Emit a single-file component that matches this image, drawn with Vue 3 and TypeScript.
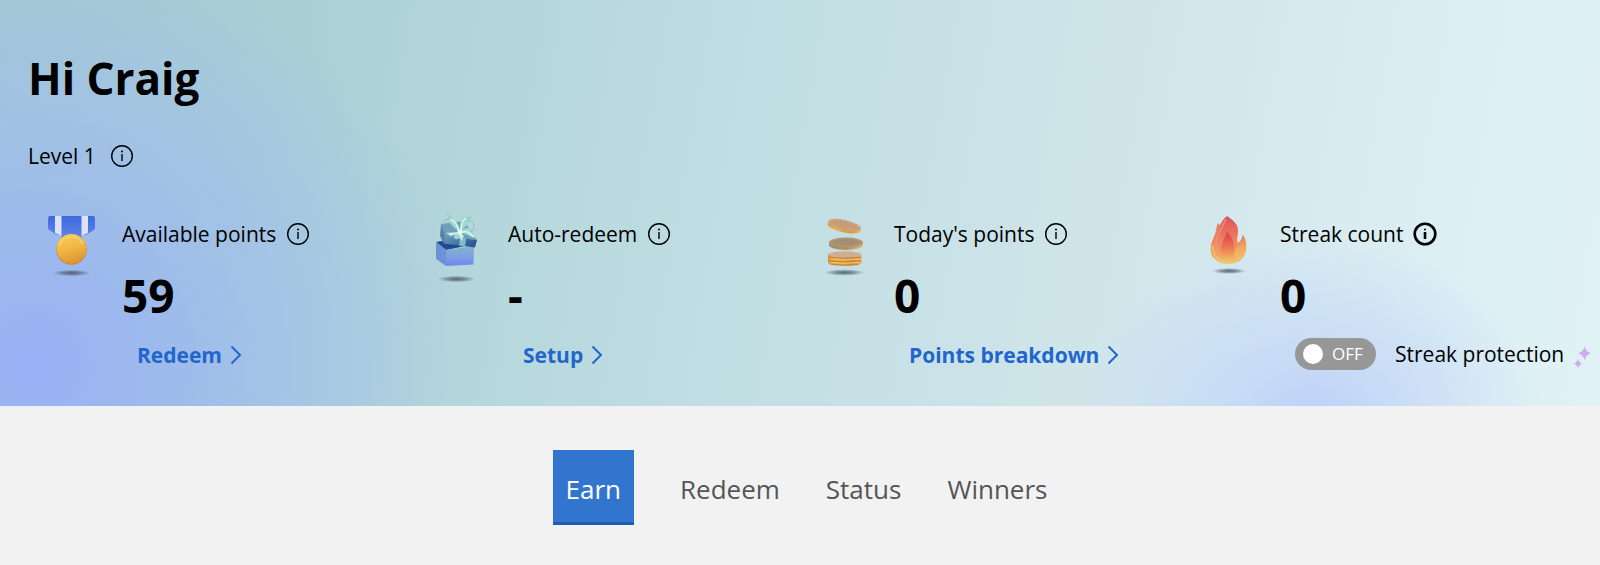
<script setup lang="ts">
import { ref } from 'vue'

type IconName = 'medal' | 'gift' | 'coins' | 'flame'

interface Stat {
  icon: IconName
  label: string
  value: string
  link?: string
  strong?: boolean
}

const stats: Stat[] = [
  { icon: 'medal', label: 'Available points', value: '59', link: 'Redeem' },
  { icon: 'gift', label: 'Auto-redeem', value: '-', link: 'Setup' },
  { icon: 'coins', label: "Today's points", value: '0', link: 'Points breakdown' },
  { icon: 'flame', label: 'Streak count', value: '0', strong: true },
]

const tabs: string[] = ['Earn', 'Redeem', 'Status', 'Winners']
const activeTab = ref<string>('Earn')
const streakProtection = ref<boolean>(false)
</script>

<template>
  <div class="page">
    <header class="hero">
      <h1 class="greeting">Hi Craig</h1>
      <div class="level">
        <span>Level 1</span>
        <button class="info" type="button" aria-label="About levels">
          <svg viewBox="0 0 24 24" aria-hidden="true">
            <circle cx="12" cy="12" r="10.3" />
            <path d="M12 10v7" />
            <circle class="dot" cx="12" cy="7.4" r="1" />
          </svg>
        </button>
      </div>

      <div class="stats">
        <section v-for="stat in stats" :key="stat.label" class="stat">
          <div class="picture">
            <svg v-if="stat.icon === 'medal'" viewBox="0 0 70 80" aria-hidden="true">
              <defs>
                <linearGradient id="ribbon" x1="0" y1="0" x2="0" y2="1">
                  <stop offset="0" stop-color="#3f68dc" />
                  <stop offset="1" stop-color="#5c84ea" />
                </linearGradient>
                <linearGradient id="gold" x1="0" y1="0" x2="0.3" y2="1">
                  <stop offset="0" stop-color="#fbcf62" />
                  <stop offset="0.6" stop-color="#efb542" />
                  <stop offset="1" stop-color="#dc9a35" />
                </linearGradient>
                <radialGradient id="shade">
                  <stop offset="0" stop-color="#3f4a5c" stop-opacity="0.8" />
                  <stop offset="0.5" stop-color="#4b5668" stop-opacity="0.55" />
                  <stop offset="1" stop-color="#5b6678" stop-opacity="0" />
                </radialGradient>
              </defs>
              <path d="M10 12h11v19h-4l-8-5q-1-1-1-3v-8q0-3 2-3z" fill="url(#ribbon)" />
              <path d="M53 12h-11v19h4l8-5q1-1 1-3v-8q0-3-2-3z" fill="url(#ribbon)" />
              <path d="M15 12h7v20l-7-3z" fill="#dde2f6" />
              <path d="M48 12h-7v20l7-3z" fill="#dde2f6" />
              <path d="M21.500 12h20v22h-20z" fill="url(#ribbon)" />
              <circle cx="31.500" cy="45.500" r="15.300" fill="#c68836" />
              <circle cx="31.500" cy="44.800" r="14.900" fill="url(#gold)" />
              <path d="M19 42a13 13 0 0 1 24-2" fill="none" stroke="#ffe08a" stroke-width="1.200" opacity="0.600" />
              <ellipse cx="31.500" cy="69" rx="19" ry="3.300" fill="url(#shade)" />
            </svg>

            <svg v-else-if="stat.icon === 'gift'" viewBox="1 0 70 80" aria-hidden="true">
              <defs>
                <linearGradient id="box" x1="0" y1="0" x2="0" y2="1">
                  <stop offset="0" stop-color="#7eb6c7" />
                  <stop offset="0.5" stop-color="#7fa2df" />
                  <stop offset="1" stop-color="#6e86f0" />
                </linearGradient>
                <linearGradient id="lid" x1="0" y1="0" x2="1" y2="0.5">
                  <stop offset="0" stop-color="#6a9dbb" />
                  <stop offset="1" stop-color="#2d5697" />
                </linearGradient>
              </defs>
              <path d="M11 38l18-3 21 5-29 6z" fill="#244991" />
              <path d="M11 38.500l10 7.500v16l-10-7z" fill="#6b91d9" />
              <path d="M21 46l28-4-.5 18.500L21 62z" fill="url(#box)" />
              <path d="M16 20l23-3 13 19-33-3z" fill="#6f9fb8" />
              <path d="M19 32l33 4-2 7.500-31-4z" fill="url(#lid)" />
              <path d="M16 20l4 12-1 8-4-8z" fill="#5585ae" />
              <path d="M35 33.500l6 1-1 8-6-1z" fill="#83bdc8" />
              <path d="M34 28C28 22 21 17 23 13.500S34 18 35 26c0-9 2-15 7-15s4 8-6 16c9-8 12 0 15 7-6-1-10-4-14-5-1 5-4 8-8 5 0-3 2-5 5-6z" fill="#a0d8cf" />
              <path d="M34 28l-13 1 5 3 8-3 2 8 3-5z" fill="#c9f0e4" />
              <path d="M34 27c-2-7-6-11-9-12M36 27c0-7 2-11 5-13M37 28c5-2 8 1 12 5" fill="none" stroke="#d8f6ed" stroke-width="1.500" />
              <path d="M26 15q-7-1-6 5M21 9q4 3 5 5M42 17q6-1 7 4t-4 7M47 14q-2-2-5 1" fill="none" stroke="#8cc3c6" stroke-width="1" />
              <circle cx="35" cy="28" r="2.500" fill="#e4fff5" />
              <ellipse cx="31.500" cy="75" rx="19" ry="3.300" fill="url(#shade)" />
            </svg>

            <svg v-else-if="stat.icon === 'coins'" viewBox="-3 0 70 80" aria-hidden="true">
              <defs>
                <linearGradient id="edge" x1="0" y1="0" x2="1" y2="0">
                  <stop offset="0" stop-color="#e09a3e" />
                  <stop offset="0.3" stop-color="#e9ae52" />
                  <stop offset="0.7" stop-color="#d9953f" />
                  <stop offset="1" stop-color="#ecb45e" />
                </linearGradient>
                <linearGradient id="dull" x1="0" y1="0" x2="1" y2="0">
                  <stop offset="0" stop-color="#a98a52" />
                  <stop offset="0.5" stop-color="#b3904f" />
                  <stop offset="1" stop-color="#dfb96c" />
                </linearGradient>
              </defs>
              <g transform="rotate(13 29.5 21.5)">
                <ellipse cx="29.500" cy="23.500" rx="16.800" ry="5" fill="url(#edge)" />
                <ellipse cx="29.500" cy="21" rx="16.800" ry="5" fill="#cda27b" />
                <ellipse cx="29.500" cy="20.800" rx="13" ry="3.200" fill="#c79c77" />
              </g>
              <ellipse cx="31" cy="41" rx="17" ry="5" fill="url(#dull)" />
              <path d="M14 38.500h34v2.500h-34z" fill="url(#dull)" />
              <ellipse cx="31" cy="38.500" rx="17" ry="5" fill="#ad9579" />
              <ellipse cx="31" cy="38.300" rx="13" ry="3.200" fill="#a68e73" />
              <path d="M13 50.500h33.500v8.500q-2 3-16.700 3t-16.800-3z" fill="url(#edge)" />
              <ellipse cx="29.700" cy="50.500" rx="16.700" ry="3.200" fill="#cfae95" />
              <path d="M13.300 53.200q16 2.500 33 0M13.300 56.800q16 2.500 33 0" fill="none" stroke="#bd7a2e" stroke-width="0.900" />
              <path d="M16 54.800q14 2 28 0M16 58.300q14 2 28 0" fill="none" stroke="#f4c56c" stroke-width="1" />
              <path d="M16 60.300q14 1.800 28 0" fill="none" stroke="#ae8b48" stroke-width="1" />
              <ellipse cx="29.500" cy="68.500" rx="20" ry="3.300" fill="url(#shade)" />
            </svg>

            <svg v-else viewBox="-2 0 70 80" aria-hidden="true">
              <defs>
                <linearGradient id="fire" x1="0" y1="0" x2="0" y2="1">
                  <stop offset="0" stop-color="#dd5058" />
                  <stop offset="0.45" stop-color="#ec7d60" />
                  <stop offset="0.8" stop-color="#f0a25e" />
                  <stop offset="1" stop-color="#efc878" />
                </linearGradient>
                <linearGradient id="core" x1="0" y1="0" x2="0" y2="1">
                  <stop offset="0" stop-color="#dc3f49" />
                  <stop offset="0.5" stop-color="#e96850" stop-opacity="0.850" />
                  <stop offset="1" stop-color="#f3a558" stop-opacity="0" />
                </linearGradient>
                <linearGradient id="side" x1="0" y1="0" x2="0" y2="1">
                  <stop offset="0" stop-color="#e37a57" />
                  <stop offset="0.5" stop-color="#f0ab60" />
                  <stop offset="1" stop-color="#f0c56c" />
                </linearGradient>
              </defs>
              <path d="M18 19c3 3 4 8 2 13l-7 23c-4-10-2-16 1-22 2-5 2-10 4-14z" fill="url(#side)" />
              <path d="M27 12c8 5 12 10 11 17-1 5-1 9 0 10 3-2 4-5 5-8 2 5 3 13 2 18-2 7-8 11-17 11-11 0-18-7-17-17 1-8 5-13 8-19 2-5 3-8 8-12z" fill="url(#fire)" />
              <path d="M43 31c4 6 4 13 2 19-3 7-9 9-16 9 8-4 6-9 6-12 1-5 7-8 8-16z" fill="url(#side)" />
              <path d="M27 28c5 5 7 9 7 16 1 6-3 10-9 12-7-6-4-15 2-28z" fill="url(#core)" />
              <path d="M26 15c-4 9-7 12-9 18-2 5-1 11 1 14" fill="none" stroke="#f2978a" stroke-width="2" opacity="0.600" />
              <path d="M13 42c-1 9 6 16 15 16" fill="none" stroke="#f1ca6c" stroke-width="2" opacity="0.700" />
              <ellipse cx="29" cy="67" rx="17" ry="3" fill="url(#shade)" />
            </svg>
          </div>

          <div class="details">
            <div class="label">
              <h2>{{ stat.label }}</h2>
              <button class="info" :class="{ strong: stat.strong }" type="button" :aria-label="`About ${stat.label}`">
                <svg viewBox="0 0 24 24" aria-hidden="true">
                  <circle cx="12" cy="12" r="10.3" />
                  <path d="M12 10v7" />
                  <circle class="dot" cx="12" cy="7.4" r="1" />
                </svg>
              </button>
            </div>
            <p class="value">{{ stat.value }}</p>
            <a v-if="stat.link" class="action" href="#">
              <span>{{ stat.link }}</span>
              <svg viewBox="0 0 12 20" aria-hidden="true"><path d="M1.500 1.500l8.500 8.500-8.500 8.500" /></svg>
            </a>
            <label v-else class="protection">
              <span class="switch">
                <input v-model="streakProtection" type="checkbox" role="switch" aria-label="Streak protection" />
                <span class="knob"></span>
                <span class="state">{{ streakProtection ? 'ON' : 'OFF' }}</span>
              </span>
              <span class="name">Streak protection</span>
              <svg class="sparkles" viewBox="0 0 20 24" aria-hidden="true">
                <path d="M12.500 1q1.200 6 6.500 7.300-5.300 1.400-6.500 7.200-1.200-5.800-6.500-7.200Q11.300 7 12.500 1z" />
                <path d="M6 13.500q.8 4.200 4.500 5.100-3.700 1-4.500 4.900-.8-3.900-4.500-4.900 3.700-.9 4.500-5.100z" />
              </svg>
            </label>
          </div>
        </section>
      </div>
    </header>

    <nav class="tabs" aria-label="Rewards">
      <a
        v-for="tab in tabs"
        :key="tab"
        href="#"
        class="tab"
        :class="{ active: tab === activeTab }"
        :aria-current="tab === activeTab ? 'page' : undefined"
        @click.prevent="activeTab = tab"
      >{{ tab }}</a>
    </nav>
  </div>
</template>

<style>
body {
  margin: 0;
  background: #f2f2f2;
}
</style>

<style scoped>
.page {
  min-height: 100vh;
  color: #000;
  font-family: "Segoe UI", "Open Sans", "Noto Sans", sans-serif;
  font-size: 21px;
  line-height: 28px;
  background: #f2f2f2;
}

.hero {
  padding: 46px 28px 34px;
  background:
    radial-gradient(circle 430px at 34px 364px, #99b1f6 0%, rgba(154, 180, 243, 0.85) 22%, rgba(160, 190, 238, 0.6) 62%, rgba(164, 200, 226, 0) 100%),
    radial-gradient(ellipse 230px 180px at 82% 103%, #bfd0f8 0%, rgba(196, 215, 248, 0.8) 35%, rgba(208, 228, 244, 0) 100%),
    linear-gradient(100deg, #a2c9ce 0%, #a8cfd3 16%, #bddce1 42%, #cfe5ea 68%, #dceff4 90%, #e0f2f5 100%);
}

.greeting {
  margin: 0;
  font-size: 44px;
  line-height: 64px;
  font-weight: 700;
}

.level {
  display: flex;
  align-items: center;
  gap: 14px;
  margin-top: 32px;
}

.info {
  flex: none;
  width: 24px;
  height: 24px;
  padding: 0;
  border: 0;
  background: none;
  cursor: pointer;
}

.info svg {
  display: block;
  width: 24px;
  height: 24px;
  fill: none;
  stroke: #000;
  stroke-width: 1.4;
}

.info .dot {
  fill: #000;
  stroke: none;
}

.info.strong svg {
  stroke-width: 2.6;
}

.stats {
  display: grid;
  grid-template-columns: repeat(4, minmax(0, 1fr));
  margin-top: 34px;
}

.stat {
  display: flex;
}

.picture {
  flex: none;
  width: 82px;
  padding-left: 12px;
  box-sizing: border-box;
}

.picture svg {
  display: block;
  width: 70px;
  height: 80px;
}

.details {
  padding: 16px 0 0 12px;
  white-space: nowrap;
}

.label {
  display: flex;
  align-items: center;
  gap: 10px;
}

.label h2 {
  margin: 0;
  font-size: 21px;
  font-weight: 400;
}

.value {
  margin: 0;
  padding: 17px 0 13px;
  font-size: 46px;
  line-height: 60px;
  font-weight: 700;
}

.action {
  display: flex;
  align-items: center;
  gap: 8px;
  height: 34px;
  padding-left: 15px;
  color: #2266cc;
  font-weight: 700;
  text-decoration: none;
}

.action svg {
  width: 12px;
  height: 20px;
  fill: none;
  stroke: currentColor;
  stroke-width: 2;
}

.protection {
  display: flex;
  align-items: center;
  padding-left: 15px;
}

.switch {
  display: grid;
  grid-template-columns: 37px 1fr;
  align-items: center;
  width: 81px;
  height: 32px;
  border-radius: 16px;
  background: #979797;
  color: #fff;
  font-size: 17px;
}

.switch input {
  grid-area: 1 / 1 / 2 / 3;
  width: 100%;
  height: 100%;
  margin: 0;
  appearance: none;
  border-radius: 16px;
  cursor: pointer;
}

.knob {
  grid-area: 1 / 1;
  width: 20px;
  height: 20px;
  margin-left: 8px;
  border-radius: 50%;
  background: #fff;
  pointer-events: none;
}

.state {
  grid-area: 1 / 2;
  pointer-events: none;
}

.name {
  margin-left: 19px;
}

.sparkles {
  flex: none;
  width: 20px;
  height: 24px;
  margin: 6px 0 0 8px;
  fill: #cfaaf0;
}

.tabs {
  display: flex;
  justify-content: center;
  gap: 46px;
  padding: 44px 12px 40px;
}

.tab {
  padding: 20px 0 14px;
  border-bottom: 3px solid transparent;
  color: #555;
  font-size: 26px;
  line-height: 38px;
  text-decoration: none;
}

.tab.active {
  padding-right: 13px;
  padding-left: 13px;
  border-bottom-color: #1c5cb5;
  background: #3275ce;
  color: #fff;
}
</style>
